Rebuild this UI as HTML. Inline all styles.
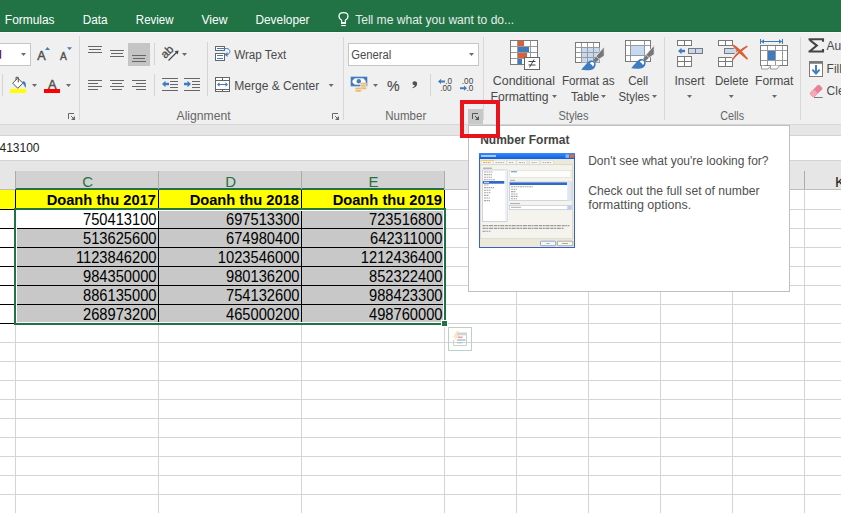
<!DOCTYPE html>
<html><head><meta charset="utf-8"><style>
*{margin:0;padding:0;box-sizing:border-box}
html,body{width:841px;height:513px;overflow:hidden;background:#fff}
body{position:relative;font-family:"Liberation Sans",sans-serif}
.a{position:absolute}
.t{position:absolute;white-space:nowrap;line-height:1;font-size:12px}
svg{position:absolute;overflow:visible}
</style></head><body>
<div class="a" style="left:0px;top:125px;width:841px;height:46px;background:#e6e6e6"></div>
<div class="a" style="left:0px;top:135px;width:841px;height:26px;background:#fff;border-top:1px solid #d4d4d4;border-bottom:1px solid #d4d4d4"></div>
<span class="t" style="left:-0.5px;top:142.34px;font-size:12px;color:#222;">413100</span>
<div class="a" style="left:0px;top:171px;width:841px;height:19px;background:#e6e6e6"></div>
<div class="a" style="left:0px;top:189px;width:15px;height:1px;background:#bdbdbd"></div>
<div class="a" style="left:444px;top:189px;width:397px;height:1px;background:#bdbdbd"></div>
<div class="a" style="left:15px;top:171px;width:429px;height:17px;background:#d2d2d2"></div>
<div class="a" style="left:15px;top:188px;width:429px;height:2px;background:#217346"></div>
<div class="a" style="left:15px;top:171px;width:1px;height:18px;background:#ababab"></div>
<div class="a" style="left:158px;top:171px;width:1px;height:18px;background:#ababab"></div>
<div class="a" style="left:301px;top:171px;width:1px;height:18px;background:#ababab"></div>
<div class="a" style="left:444px;top:171px;width:1px;height:18px;background:#ababab"></div>
<div class="a" style="left:516px;top:171px;width:1px;height:18px;background:#ababab"></div>
<div class="a" style="left:588px;top:171px;width:1px;height:18px;background:#ababab"></div>
<div class="a" style="left:660px;top:171px;width:1px;height:18px;background:#ababab"></div>
<div class="a" style="left:732px;top:171px;width:1px;height:18px;background:#ababab"></div>
<div class="a" style="left:804px;top:171px;width:1px;height:18px;background:#ababab"></div>
<span class="t" style="left:57.599999999999994px;width:60px;text-align:center;top:173.70px;font-size:15px;color:#217346">C</span>
<span class="t" style="left:200.6px;width:60px;text-align:center;top:173.70px;font-size:15px;color:#217346">D</span>
<span class="t" style="left:343.5px;width:60px;text-align:center;top:173.70px;font-size:15px;color:#217346">E</span>
<span class="t" style="left:835px;top:173.70px;font-size:15px;color:#222">K</span>
<div class="a" style="left:0px;top:209px;width:841px;height:1px;background:#d4d4d4"></div>
<div class="a" style="left:0px;top:228px;width:841px;height:1px;background:#d4d4d4"></div>
<div class="a" style="left:0px;top:247px;width:841px;height:1px;background:#d4d4d4"></div>
<div class="a" style="left:0px;top:266px;width:841px;height:1px;background:#d4d4d4"></div>
<div class="a" style="left:0px;top:285px;width:841px;height:1px;background:#d4d4d4"></div>
<div class="a" style="left:0px;top:304px;width:841px;height:1px;background:#d4d4d4"></div>
<div class="a" style="left:0px;top:323px;width:841px;height:1px;background:#d4d4d4"></div>
<div class="a" style="left:0px;top:342px;width:841px;height:1px;background:#d4d4d4"></div>
<div class="a" style="left:0px;top:361px;width:841px;height:1px;background:#d4d4d4"></div>
<div class="a" style="left:0px;top:380px;width:841px;height:1px;background:#d4d4d4"></div>
<div class="a" style="left:0px;top:399px;width:841px;height:1px;background:#d4d4d4"></div>
<div class="a" style="left:0px;top:418px;width:841px;height:1px;background:#d4d4d4"></div>
<div class="a" style="left:0px;top:437px;width:841px;height:1px;background:#d4d4d4"></div>
<div class="a" style="left:0px;top:456px;width:841px;height:1px;background:#d4d4d4"></div>
<div class="a" style="left:0px;top:475px;width:841px;height:1px;background:#d4d4d4"></div>
<div class="a" style="left:0px;top:494px;width:841px;height:1px;background:#d4d4d4"></div>
<div class="a" style="left:15px;top:190px;width:1px;height:323px;background:#d4d4d4"></div>
<div class="a" style="left:158px;top:190px;width:1px;height:323px;background:#d4d4d4"></div>
<div class="a" style="left:301px;top:190px;width:1px;height:323px;background:#d4d4d4"></div>
<div class="a" style="left:444px;top:190px;width:1px;height:323px;background:#d4d4d4"></div>
<div class="a" style="left:516px;top:190px;width:1px;height:323px;background:#d4d4d4"></div>
<div class="a" style="left:588px;top:190px;width:1px;height:323px;background:#d4d4d4"></div>
<div class="a" style="left:660px;top:190px;width:1px;height:323px;background:#d4d4d4"></div>
<div class="a" style="left:732px;top:190px;width:1px;height:323px;background:#d4d4d4"></div>
<div class="a" style="left:804px;top:190px;width:1px;height:323px;background:#d4d4d4"></div>
<div class="a" style="left:0px;top:190px;width:444px;height:19px;background:#ffff00"></div>
<div class="a" style="left:15px;top:209px;width:429px;height:114px;background:#c8c8c8"></div>
<div class="a" style="left:15px;top:209px;width:143px;height:19px;background:#fff"></div>
<div class="a" style="left:0px;top:209px;width:444px;height:1px;background:#000"></div>
<div class="a" style="left:0px;top:228px;width:444px;height:1px;background:#000"></div>
<div class="a" style="left:0px;top:247px;width:444px;height:1px;background:#000"></div>
<div class="a" style="left:0px;top:266px;width:444px;height:1px;background:#000"></div>
<div class="a" style="left:0px;top:285px;width:444px;height:1px;background:#000"></div>
<div class="a" style="left:0px;top:304px;width:444px;height:1px;background:#000"></div>
<div class="a" style="left:0px;top:323px;width:444px;height:1px;background:#000"></div>
<div class="a" style="left:15px;top:190px;width:1px;height:133px;background:#000"></div>
<div class="a" style="left:158px;top:190px;width:1px;height:133px;background:#000"></div>
<div class="a" style="left:301px;top:190px;width:1px;height:133px;background:#000"></div>
<div class="a" style="left:444px;top:190px;width:1px;height:19px;background:#000"></div>
<span class="t" style="left:8px;width:148px;text-align:right;top:192.56px;font-size:14.7px;font-weight:bold;color:#000">Doanh thu 2017</span>
<span class="t" style="left:151px;width:148px;text-align:right;top:192.56px;font-size:14.7px;font-weight:bold;color:#000">Doanh thu 2018</span>
<span class="t" style="left:294px;width:148px;text-align:right;top:192.56px;font-size:14.7px;font-weight:bold;color:#000">Doanh thu 2019</span>
<span class="t" style="left:18px;width:138.5px;text-align:right;top:213.16px;font-size:14.7px;color:#000;transform:scaleY(1.09);transform-origin:0 12.44px">750413100</span>
<span class="t" style="left:161px;width:138.5px;text-align:right;top:213.16px;font-size:14.7px;color:#000;transform:scaleY(1.09);transform-origin:0 12.44px">697513300</span>
<span class="t" style="left:304px;width:138.5px;text-align:right;top:213.16px;font-size:14.7px;color:#000;transform:scaleY(1.09);transform-origin:0 12.44px">723516800</span>
<span class="t" style="left:18px;width:138.5px;text-align:right;top:232.16px;font-size:14.7px;color:#000;transform:scaleY(1.09);transform-origin:0 12.44px">513625600</span>
<span class="t" style="left:161px;width:138.5px;text-align:right;top:232.16px;font-size:14.7px;color:#000;transform:scaleY(1.09);transform-origin:0 12.44px">674980400</span>
<span class="t" style="left:304px;width:138.5px;text-align:right;top:232.16px;font-size:14.7px;color:#000;transform:scaleY(1.09);transform-origin:0 12.44px">642311000</span>
<span class="t" style="left:18px;width:138.5px;text-align:right;top:251.16px;font-size:14.7px;color:#000;transform:scaleY(1.09);transform-origin:0 12.44px">1123846200</span>
<span class="t" style="left:161px;width:138.5px;text-align:right;top:251.16px;font-size:14.7px;color:#000;transform:scaleY(1.09);transform-origin:0 12.44px">1023546000</span>
<span class="t" style="left:304px;width:138.5px;text-align:right;top:251.16px;font-size:14.7px;color:#000;transform:scaleY(1.09);transform-origin:0 12.44px">1212436400</span>
<span class="t" style="left:18px;width:138.5px;text-align:right;top:270.16px;font-size:14.7px;color:#000;transform:scaleY(1.09);transform-origin:0 12.44px">984350000</span>
<span class="t" style="left:161px;width:138.5px;text-align:right;top:270.16px;font-size:14.7px;color:#000;transform:scaleY(1.09);transform-origin:0 12.44px">980136200</span>
<span class="t" style="left:304px;width:138.5px;text-align:right;top:270.16px;font-size:14.7px;color:#000;transform:scaleY(1.09);transform-origin:0 12.44px">852322400</span>
<span class="t" style="left:18px;width:138.5px;text-align:right;top:289.16px;font-size:14.7px;color:#000;transform:scaleY(1.09);transform-origin:0 12.44px">886135000</span>
<span class="t" style="left:161px;width:138.5px;text-align:right;top:289.16px;font-size:14.7px;color:#000;transform:scaleY(1.09);transform-origin:0 12.44px">754132600</span>
<span class="t" style="left:304px;width:138.5px;text-align:right;top:289.16px;font-size:14.7px;color:#000;transform:scaleY(1.09);transform-origin:0 12.44px">988423300</span>
<span class="t" style="left:18px;width:138.5px;text-align:right;top:308.16px;font-size:14.7px;color:#000;transform:scaleY(1.09);transform-origin:0 12.44px">268973200</span>
<span class="t" style="left:161px;width:138.5px;text-align:right;top:308.16px;font-size:14.7px;color:#000;transform:scaleY(1.09);transform-origin:0 12.44px">465000200</span>
<span class="t" style="left:304px;width:138.5px;text-align:right;top:308.16px;font-size:14.7px;color:#000;transform:scaleY(1.09);transform-origin:0 12.44px">498760000</span>
<div class="a" style="left:16px;top:210px;width:1px;height:113px;background:#fff"></div>
<div class="a" style="left:16px;top:210px;width:428px;height:1px;background:#fff"></div>
<div class="a" style="left:443px;top:210px;width:1px;height:113px;background:#fff"></div>
<div class="a" style="left:16px;top:322px;width:428px;height:1px;background:#fff"></div>
<div class="a" style="left:14px;top:208px;width:2px;height:116px;background:#217346"></div>
<div class="a" style="left:14px;top:208px;width:432px;height:2px;background:#217346"></div>
<div class="a" style="left:444px;top:208px;width:2px;height:114px;background:#217346"></div>
<div class="a" style="left:14px;top:323px;width:428px;height:2px;background:#217346"></div>
<div class="a" style="left:441px;top:320px;width:7px;height:7px;background:#fff"></div>
<div class="a" style="left:442px;top:321px;width:5px;height:5px;background:#217346"></div>
<div class="a" style="left:448px;top:327px;width:24px;height:24px;border:1px solid #b9d3c3"></div>
<svg class="a" style="left:0;top:0" width="841" height="513"><g opacity="0.8"><path d="M457.5 334 H466.5 V345.5 H453.5 V340" fill="none" stroke="#c4c4c4"/><rect x="457" y="332.5" width="10" height="2.8" fill="#c8c8c8"/><path d="M456.8 331 L452.6 337.4 H455.8 L453.4 341.8 L459.6 335 H456.4 L459.2 331 Z" fill="#f6dfb8"/><rect x="458" y="336.5" width="4.5" height="1.6" fill="#e88a7a"/><rect x="457" y="339.2" width="8.5" height="1.7" fill="#9fbbe0"/><rect x="457" y="342" width="5.5" height="1.4" fill="#9ccfb0"/></g></svg>
<div class="a" style="left:0px;top:0px;width:841px;height:32px;background:#217346;border-bottom:1px solid #1e6b41"></div>
<svg class="a" style="left:0;top:0" width="841" height="513"><text x="4.86" y="23.8" font-family="Liberation Sans" font-size="12" font-weight="normal" fill="#fff" textLength="49.68" lengthAdjust="spacingAndGlyphs" >Formulas</text></svg>
<svg class="a" style="left:0;top:0" width="841" height="513"><text x="82.66" y="23.8" font-family="Liberation Sans" font-size="12" font-weight="normal" fill="#fff" textLength="24.88" lengthAdjust="spacingAndGlyphs" >Data</text></svg>
<svg class="a" style="left:0;top:0" width="841" height="513"><text x="135.86" y="23.8" font-family="Liberation Sans" font-size="12" font-weight="normal" fill="#fff" textLength="37.68" lengthAdjust="spacingAndGlyphs" >Review</text></svg>
<svg class="a" style="left:0;top:0" width="841" height="513"><text x="201.46" y="23.8" font-family="Liberation Sans" font-size="12" font-weight="normal" fill="#fff" textLength="26.08" lengthAdjust="spacingAndGlyphs" >View</text></svg>
<svg class="a" style="left:0;top:0" width="841" height="513"><text x="255.46" y="23.8" font-family="Liberation Sans" font-size="12" font-weight="normal" fill="#fff" textLength="54.08" lengthAdjust="spacingAndGlyphs" >Developer</text></svg>
<svg class="a" style="left:0;top:0" width="841" height="513"><text x="355.16" y="24" font-family="Liberation Sans" font-size="12" font-weight="normal" fill="#e6ede9" textLength="158.98" lengthAdjust="spacingAndGlyphs" >Tell me what you want to do...</text></svg>
<svg class="a" style="left:0;top:0" width="841" height="32"><path d="M341.6 22.6 V20.3 C337.6 17.6 338.2 12.7 343.5 12.7 C348.8 12.7 349.4 17.6 345.4 20.3 V22.6 Z" fill="none" stroke="#fff" stroke-width="1.2"/><rect x="341" y="22.3" width="5" height="1.6" fill="#fff"/><rect x="341.2" y="25" width="4.6" height="1.1" fill="#fff"/></svg>
<div class="a" style="left:0px;top:32px;width:841px;height:93px;background:#f0f0f0;border-top:1px solid #f8f8f8;border-bottom:1px solid #d6d6d6"></div>
<div class="a" style="left:79px;top:36px;width:1px;height:84px;background:#d8d8d8"></div>
<div class="a" style="left:343px;top:37px;width:1px;height:83px;background:#d8d8d8"></div>
<div class="a" style="left:483px;top:37px;width:1px;height:83px;background:#d8d8d8"></div>
<div class="a" style="left:664px;top:37px;width:1px;height:83px;background:#d8d8d8"></div>
<div class="a" style="left:800px;top:37px;width:1px;height:83px;background:#d8d8d8"></div>
<svg class="a" style="left:0;top:0" width="841" height="513"><text x="176.56" y="120.3" font-family="Liberation Sans" font-size="12" font-weight="normal" fill="#666" textLength="54.08" lengthAdjust="spacingAndGlyphs" >Alignment</text></svg>
<svg class="a" style="left:0;top:0" width="841" height="513"><text x="385.26" y="120.3" font-family="Liberation Sans" font-size="12" font-weight="normal" fill="#666" textLength="40.98" lengthAdjust="spacingAndGlyphs" >Number</text></svg>
<svg class="a" style="left:0;top:0" width="841" height="513"><text x="558.46" y="120.3" font-family="Liberation Sans" font-size="12" font-weight="normal" fill="#666" textLength="30.08" lengthAdjust="spacingAndGlyphs" >Styles</text></svg>
<svg class="a" style="left:0;top:0" width="841" height="513"><text x="720.16" y="120.3" font-family="Liberation Sans" font-size="12" font-weight="normal" fill="#666" textLength="23.88" lengthAdjust="spacingAndGlyphs" >Cells</text></svg>
<svg class="a" style="left:0;top:0" width="841" height="130" viewBox="0 0 841 130"><rect x="-1.5" y="43.5" width="32" height="22" fill="#fff" stroke="#c6c6c6"/><rect x="0" y="50" width="1.2" height="8.7" fill="#5b2a86"/><path d="M21 53h5l-2.5 3z" fill="#6b6b6b"/><text x="37.3" y="59.6" font-size="12.6" fill="#505050" stroke="#505050" stroke-width="0.45" font-family="Liberation Sans">A</text><path d="M45 50h5l-2.5-3z" fill="#3e7bbf"/><text x="60.1" y="59.6" font-size="10.2" fill="#505050" stroke="#505050" stroke-width="0.4" font-family="Liberation Sans">A</text><path d="M67 47.3h5l-2.5 2.7z" fill="#3e7bbf"/><rect x="2" y="74" width="1" height="22" fill="#d4d4d4"/><path d="M12.7 83.2 L17.8 78.1 L22.9 83.2 L17.8 88.3 Z" fill="#fff" stroke="#555" stroke-width="1"/><path d="M16 80 V77.3 H18.3 V82.5" fill="none" stroke="#555" stroke-width="1"/><path d="M22.6 81.2 C25.2 80.8 26.6 83.5 25.6 88 C24.8 86.5 24 84.5 22.9 83.4 Z" fill="#3e7bbf"/><rect x="10" y="89" width="16" height="4" fill="#ffff00"/><path d="M32 84h5l-2.5 3z" fill="#6b6b6b"/><text x="47.9" y="88.6" font-size="12.8" fill="#505050" stroke="#505050" stroke-width="0.45" font-family="Liberation Sans">A</text><rect x="44" y="89" width="16" height="4" fill="#ff0000"/><path d="M66 84h5l-2.5 3z" fill="#6b6b6b"/><path d="M68.5 119 V113.5 H74" fill="none" stroke="#666" stroke-width="1"/><path d="M75 116 V120 H71 Z" fill="#666"/><path d="M71 116 L74 119" stroke="#666" stroke-width="1"/><rect x="88" y="46" width="14" height="1" fill="#666"/><rect x="89" y="49" width="12" height="1" fill="#666"/><rect x="88" y="52" width="14" height="1" fill="#666"/><rect x="110" y="50" width="14" height="1" fill="#666"/><rect x="111" y="53" width="12" height="1" fill="#666"/><rect x="110" y="56" width="14" height="1" fill="#666"/><rect x="128" y="43" width="22" height="23" fill="#c5c5c5"/><rect x="132" y="55" width="14" height="1" fill="#666"/><rect x="133" y="58" width="12" height="1" fill="#666"/><rect x="132" y="61" width="14" height="1" fill="#666"/><rect x="88" y="80" width="14" height="1" fill="#666"/><rect x="110" y="80" width="14" height="1" fill="#666"/><rect x="132" y="80" width="14" height="1" fill="#666"/><rect x="88" y="83" width="10" height="1" fill="#666"/><rect x="112" y="83" width="10" height="1" fill="#666"/><rect x="136" y="83" width="10" height="1" fill="#666"/><rect x="88" y="86" width="14" height="1" fill="#666"/><rect x="110" y="86" width="14" height="1" fill="#666"/><rect x="132" y="86" width="14" height="1" fill="#666"/><rect x="88" y="89" width="10" height="1" fill="#666"/><rect x="112" y="89" width="10" height="1" fill="#666"/><rect x="136" y="89" width="10" height="1" fill="#666"/><rect x="154" y="43" width="1" height="22" fill="#d4d4d4"/><rect x="154" y="74" width="1" height="22" fill="#d4d4d4"/><text x="0" y="0" font-size="11.5" fill="#4a4a4a" stroke="#4a4a4a" stroke-width="0.3" font-family="Liberation Sans" transform="translate(165.2 58.9) rotate(-45)">ab</text><path d="M168.5 60.5 L177.5 51.5" stroke="#444" stroke-width="1.1"/><path d="M178.5 50.5 L174.5 51.2 L177.8 54.5 Z" fill="#444"/><path d="M182 53h5l-2.5 3z" fill="#6b6b6b"/><rect x="162" y="78" width="16" height="1" fill="#666"/><rect x="170" y="81" width="8" height="1" fill="#666"/><rect x="170" y="84" width="8" height="1" fill="#666"/><rect x="170" y="87" width="8" height="1" fill="#666"/><rect x="162" y="90" width="16" height="1" fill="#666"/><path d="M162 84 L165.5 80.8 V82.8 H169 V85.2 H165.5 V87.2 Z" fill="#3e7bbf"/><rect x="184" y="78" width="16" height="1" fill="#666"/><rect x="192" y="81" width="8" height="1" fill="#666"/><rect x="192" y="84" width="8" height="1" fill="#666"/><rect x="192" y="87" width="8" height="1" fill="#666"/><rect x="184" y="90" width="16" height="1" fill="#666"/><path d="M191 84 L187.5 80.8 V82.8 H184 V85.2 H187.5 V87.2 Z" fill="#3e7bbf"/><rect x="207" y="42" width="1" height="54" fill="#d4d4d4"/><rect x="215.5" y="46.5" width="9" height="4" fill="#fff" stroke="#666"/><rect x="215.5" y="53.5" width="9" height="7" fill="#fff" stroke="#666"/><path d="M217 48.5 H226.5 C231 48.5 231 54.5 226.5 54.5 H225" fill="none" stroke="#3e7bbf" stroke-width="1"/><path d="M224.5 54.5 L227.5 52 V57 Z" fill="#3e7bbf"/><rect x="217" y="55" width="6" height="1" fill="#3e7bbf"/><rect x="217" y="58" width="6" height="1" fill="#3e7bbf"/><rect x="215.5" y="77.5" width="14" height="14" fill="#fff" stroke="#666"/><rect x="216" y="80" width="13" height="1" fill="#666"/><rect x="216" y="89" width="13" height="1" fill="#666"/><rect x="222" y="78" width="1" height="2" fill="#666"/><rect x="222" y="89" width="1" height="2" fill="#666"/><path d="M218 84.5 H227" stroke="#3e7bbf" stroke-width="1"/><path d="M217 84.5 L219.5 82.3 V86.7 Z M228 84.5 L225.5 82.3 V86.7 Z" fill="#3e7bbf"/><path d="M328.6 84h5l-2.5 3z" fill="#6b6b6b"/><path d="M332.5 119 V113.5 H338" fill="none" stroke="#666" stroke-width="1"/><path d="M339 116 V120 H335 Z" fill="#666"/><path d="M335 116 L338 119" stroke="#666" stroke-width="1"/><rect x="348.5" y="43.5" width="130" height="22" fill="#fff" stroke="#c6c6c6"/><path d="M469 53h5l-2.5 3z" fill="#6b6b6b"/><rect x="351.5" y="77.5" width="15" height="8" fill="#fff" stroke="#3e7bbf" stroke-width="1.6"/><circle cx="358.8" cy="81.3" r="2.2" fill="#3e7bbf"/><path d="M352 78 h3 l-3 3z M366 78 h-3 l3 3z M352 85 h3 l-3 -3z" fill="#3e7bbf"/><ellipse cx="363.5" cy="83.8" rx="3.4" ry="1.3" fill="#e9b96e" stroke="#f0f0f0" stroke-width="0.5"/><ellipse cx="363.5" cy="86" rx="3.4" ry="1.3" fill="#e9b96e" stroke="#f0f0f0" stroke-width="0.5"/><ellipse cx="363.5" cy="88.2" rx="3.4" ry="1.3" fill="#e9b96e" stroke="#f0f0f0" stroke-width="0.5"/><ellipse cx="358.3" cy="88.6" rx="3.4" ry="1.3" fill="#e9b96e" stroke="#f0f0f0" stroke-width="0.5"/><ellipse cx="358.3" cy="90.8" rx="3.4" ry="1.3" fill="#e9b96e" stroke="#f0f0f0" stroke-width="0.5"/><path d="M373 84h5l-2.5 3z" fill="#6b6b6b"/><text x="386.9" y="90.9" font-size="14.2" fill="#4a4a4a" stroke="#4a4a4a" stroke-width="0.15" font-family="Liberation Sans">%</text><path d="M414.6 81.3 C416.4 81.3 417.3 82.6 417.1 84.2 C416.9 86 415.2 87.6 412.6 88.2 L412.4 87.4 C413.8 86.8 414.6 86.1 414.8 85.3 C413.4 85.3 412.5 84.4 412.5 83.3 C412.5 82.1 413.4 81.3 414.6 81.3 Z" fill="#505050"/><rect x="430" y="74" width="1" height="22" fill="#d4d4d4"/><path d="M438 81.4 L441 78.80000000000001 V80.4 H445 V82.4 H441 V84.0 Z" fill="#3e7bbf"/><text x="445.3" y="83.8" font-size="8.2" fill="#444" font-family="Liberation Sans">.0</text><text x="440.2" y="91" font-size="8.2" fill="#444" font-family="Liberation Sans">.00</text><text x="461.8" y="83.8" font-size="8.2" fill="#444" font-family="Liberation Sans">.00</text><path d="M467 88.2 L464 85.60000000000001 V87.2 H460 V89.2 H464 V90.8 Z" fill="#3e7bbf"/><text x="466.6" y="91" font-size="8.2" fill="#444" font-family="Liberation Sans">.0</text><rect x="510.5" y="40.5" width="27" height="24" fill="#fff" stroke="#7a7a7a"/><path d="M511 46.5 H537" stroke="#9a9a9a"/><path d="M511 52.5 H537" stroke="#9a9a9a"/><path d="M511 58.5 H537" stroke="#9a9a9a"/><path d="M517.5 41 V64" stroke="#9a9a9a"/><path d="M530.5 41 V64" stroke="#9a9a9a"/><rect x="518" y="41" width="6" height="5" fill="#d9603b"/><rect x="518" y="47" width="11" height="5" fill="#3e7bbf"/><rect x="518" y="53" width="9" height="5" fill="#d9603b"/><rect x="518" y="59" width="4" height="5" fill="#3e7bbf"/><rect x="524" y="57" width="16" height="13" fill="#f0f0f0"/><rect x="524.5" y="57.5" width="15" height="12" fill="#fff" stroke="#666"/><path d="M528.5 61.5 H535.5 M528.5 65 H535.5 M534 59.5 L529.5 67.5" stroke="#444" stroke-width="1"/><rect x="575.5" y="42.5" width="24" height="20" fill="#fff" stroke="#7a7a7a"/><rect x="581.5" y="47.5" width="18" height="15" fill="#c5d9f1"/><path d="M576 47.5 H599" stroke="#9a9a9a"/><path d="M576 52.5 H599" stroke="#9a9a9a"/><path d="M576 57.5 H599" stroke="#9a9a9a"/><path d="M581.5 43 V62" stroke="#9a9a9a"/><path d="M587.5 43 V62" stroke="#9a9a9a"/><path d="M593.5 43 V62" stroke="#9a9a9a"/><g transform="translate(0 0)"><path d="M604.2 46.8 V56 L599 59.2 L596 56.2 Z" fill="#777" stroke="#f0f0f0" stroke-width="0.8"/><path d="M596.3 56.9 L598.9 59.3 L595.6 62.6 L593.1 60 Z" fill="#777"/><path d="M581.2 69.8 C584 66.5 586.5 63.5 588.2 61.8 C590 60.2 592.8 60 594.5 61.6 C596.3 63.4 596 66.6 594 68.4 C592.2 70 589.5 70.3 586.5 70.3 Z" fill="#3e7bbf"/><path d="M589.8 63.2 C591 61.8 593 61.8 593.9 63 C594.5 64 594 65.6 593 66.4 C592.3 65.2 591.2 64.2 589.8 63.2 Z" fill="#fff"/></g><rect x="625.5" y="40.5" width="25" height="21" fill="#fff" stroke="#7a7a7a"/><rect x="630.5" y="45.5" width="14" height="10" fill="#c5d9f1"/><path d="M626 45.5 H650 M626 55.5 H650 M630.5 41 V61 M644.5 41 V61" stroke="#9a9a9a"/><g transform="translate(50 -1.5)"><path d="M604.2 46.8 V56 L599 59.2 L596 56.2 Z" fill="#777" stroke="#f0f0f0" stroke-width="0.8"/><path d="M596.3 56.9 L598.9 59.3 L595.6 62.6 L593.1 60 Z" fill="#777"/><path d="M581.2 69.8 C584 66.5 586.5 63.5 588.2 61.8 C590 60.2 592.8 60 594.5 61.6 C596.3 63.4 596 66.6 594 68.4 C592.2 70 589.5 70.3 586.5 70.3 Z" fill="#3e7bbf"/><path d="M589.8 63.2 C591 61.8 593 61.8 593.9 63 C594.5 64 594 65.6 593 66.4 C592.3 65.2 591.2 64.2 589.8 63.2 Z" fill="#fff"/></g><rect x="677.5" y="40.5" width="14" height="5" fill="#fff" stroke="#7a7a7a"/><path d="M684.5 41 V45" stroke="#7a7a7a"/><path d="M678 51 L681.5 47.8 V49.8 H685 V52.2 H681.5 V54.2 Z" fill="#3e7bbf"/><rect x="688.5" y="48.5" width="14" height="5" fill="#c5d9f1" stroke="#7a7a7a"/><path d="M695.5 49 V53" stroke="#7a7a7a"/><rect x="677.5" y="56.5" width="14" height="10" fill="#fff" stroke="#7a7a7a"/><path d="M678 61.5 H691 M684.5 57 V66" stroke="#7a7a7a"/><rect x="718.5" y="40.5" width="14" height="5" fill="#fff" stroke="#7a7a7a"/><path d="M725.5 41 V45" stroke="#7a7a7a"/><rect x="724.5" y="48.5" width="12" height="5" fill="#c5d9f1" stroke="#7a7a7a"/><rect x="718.5" y="57.5" width="14" height="9" fill="#fff" stroke="#7a7a7a"/><path d="M719 61.5 H732 M725.5 58 V66" stroke="#7a7a7a"/><path d="M733 45.5 C737 47.5 741 51.5 747.2 59 M747.2 46.4 C742 49 737 53 733 59" fill="none" stroke="#f0f0f0" stroke-width="3.8"/><path d="M733 45.3 C736.5 46.8 740.5 50.5 747.5 59.2 C742 55 737.5 51 733 45.3 Z M747.3 46.2 C742.5 48.5 737.5 52.5 732.8 59.2 C737 54 742 50 747.3 46.2 Z" fill="#d9603b" stroke="#d9603b" stroke-width="1.6"/><path d="M760.5 39 V44 M782.5 39 V44 M761 41.5 H782" stroke="#3e7bbf" stroke-width="1"/><path d="M761 41.5 L764 39.3 V43.7 Z M782 41.5 L779 39.3 V43.7 Z" fill="#3e7bbf"/><rect x="760.5" y="45.5" width="27" height="20" fill="#fff" stroke="#7a7a7a"/><path d="M761 50.5 H787 M761 60.5 H787 M767.5 46 V65 M775.5 46 V65 M782.5 46 V65" stroke="#9a9a9a"/><rect x="768" y="51" width="7" height="9" fill="#3e7bbf"/><path d="M761.5 65.5 V69 H768 L770 66.5 M770.5 65.5 V69 H777 L779.5 65.5" fill="#fff" stroke="#9a9a9a"/><path d="M687.0 95h5l-2.5 3z" fill="#6b6b6b"/><path d="M728.8 95h5l-2.5 3z" fill="#6b6b6b"/><path d="M772.0 95h5l-2.5 3z" fill="#6b6b6b"/><path d="M808.5 39.3 H823 V41.8 M809.8 40 L816.8 45.6 L809.8 51.3 M808.5 51.5 H823 V49" fill="none" stroke="#444" stroke-width="2.1" stroke-linejoin="miter"/><rect x="809.5" y="61.5" width="13" height="15" fill="#fff" stroke="#7a7a7a"/><rect x="809" y="61" width="14" height="2.8" fill="#7a7a7a"/><path d="M816 65 V73.5" stroke="#3e7bbf" stroke-width="1.9"/><path d="M812.4 69.6 L816 73.6 L819.6 69.6" fill="none" stroke="#3e7bbf" stroke-width="1.9"/><path d="M810.2 92.4 L817.6 85.2 Q818.6 84.3 819.6 85.2 L822 87.6 Q822.9 88.6 822 89.6 L814.6 96.8 Q813.6 97.6 812.6 96.8 L810.2 94.4 Q809.4 93.4 810.2 92.4 Z" fill="#e9809a"/><path d="M810.4 92.6 L813.8 89.3 L817.6 93.3 L814.4 96.6 Q813.6 97.4 812.7 96.6 L810.4 94.3 Q809.6 93.4 810.4 92.6 Z" fill="#f2a9b9"/><path d="M814 97.5 H822.7" stroke="#7a7a7a" stroke-width="1"/></svg>
<svg class="a" style="left:0;top:0" width="841" height="513"><text x="234.16" y="59.2" font-family="Liberation Sans" font-size="12" font-weight="normal" fill="#4a4a4a" textLength="52.08" lengthAdjust="spacingAndGlyphs" >Wrap Text</text></svg>
<svg class="a" style="left:0;top:0" width="841" height="513"><text x="234.16" y="90" font-family="Liberation Sans" font-size="12" font-weight="normal" fill="#4a4a4a" textLength="85.18" lengthAdjust="spacingAndGlyphs" >Merge &amp; Center</text></svg>
<svg class="a" style="left:0;top:0" width="841" height="513"><text x="351.16" y="59.2" font-family="Liberation Sans" font-size="12" font-weight="normal" fill="#4a4a4a" textLength="40.08" lengthAdjust="spacingAndGlyphs" >General</text></svg>
<svg class="a" style="left:0;top:0" width="841" height="513"><text x="492.76" y="84.8" font-family="Liberation Sans" font-size="12" font-weight="normal" fill="#4a4a4a" textLength="62.18" lengthAdjust="spacingAndGlyphs" >Conditional</text></svg>
<svg class="a" style="left:0;top:0" width="841" height="513"><text x="490.46" y="100.7" font-family="Liberation Sans" font-size="12" font-weight="normal" fill="#4a4a4a" textLength="58.08" lengthAdjust="spacingAndGlyphs" >Formatting</text></svg>
<svg class="a" style="left:0;top:0" width="841" height="513"><text x="561.96" y="85" font-family="Liberation Sans" font-size="12" font-weight="normal" fill="#4a4a4a" textLength="52.58" lengthAdjust="spacingAndGlyphs" >Format as</text></svg>
<svg class="a" style="left:0;top:0" width="841" height="513"><text x="570.96" y="100.7" font-family="Liberation Sans" font-size="12" font-weight="normal" fill="#4a4a4a" textLength="28.18" lengthAdjust="spacingAndGlyphs" >Table</text></svg>
<svg class="a" style="left:0;top:0" width="841" height="513"><text x="628.16" y="85" font-family="Liberation Sans" font-size="12" font-weight="normal" fill="#4a4a4a" textLength="19.98" lengthAdjust="spacingAndGlyphs" >Cell</text></svg>
<svg class="a" style="left:0;top:0" width="841" height="513"><text x="618.46" y="100.7" font-family="Liberation Sans" font-size="12" font-weight="normal" fill="#4a4a4a" textLength="31.08" lengthAdjust="spacingAndGlyphs" >Styles</text></svg>
<svg class="a" style="left:0;top:0" width="841" height="513"><text x="674.46" y="84.8" font-family="Liberation Sans" font-size="12" font-weight="normal" fill="#4a4a4a" textLength="30.08" lengthAdjust="spacingAndGlyphs" >Insert</text></svg>
<svg class="a" style="left:0;top:0" width="841" height="513"><text x="714.96" y="84.8" font-family="Liberation Sans" font-size="12" font-weight="normal" fill="#4a4a4a" textLength="33.38" lengthAdjust="spacingAndGlyphs" >Delete</text></svg>
<svg class="a" style="left:0;top:0" width="841" height="513"><text x="755.06" y="84.8" font-family="Liberation Sans" font-size="12" font-weight="normal" fill="#4a4a4a" textLength="38.38" lengthAdjust="spacingAndGlyphs" >Format</text></svg>
<svg class="a" style="left:552.4px;top:95px" width="5" height="3"><path d="M0 0h5l-2.5 3z" fill="#6b6b6b"/></svg>
<svg class="a" style="left:601px;top:95px" width="5" height="3"><path d="M0 0h5l-2.5 3z" fill="#6b6b6b"/></svg>
<svg class="a" style="left:652px;top:95px" width="5" height="3"><path d="M0 0h5l-2.5 3z" fill="#6b6b6b"/></svg>
<span class="t" style="left:826.6px;top:40.14px;font-size:12px;color:#4a4a4a;">Au</span>
<span class="t" style="left:826.6px;top:63.44px;font-size:12px;color:#4a4a4a;">Fill</span>
<span class="t" style="left:826.6px;top:85.44px;font-size:12px;color:#4a4a4a;">Cle</span>
<div class="a" style="left:468px;top:125px;width:322px;height:167px;background:#fff;border:1px solid #bfbfbf"></div>
<svg class="a" style="left:0;top:0" width="841" height="513"><text x="480.16" y="143.8" font-family="Liberation Sans" font-size="12" font-weight="bold" fill="#444" textLength="89.28" lengthAdjust="spacingAndGlyphs" >Number Format</text></svg>
<svg class="a" style="left:0;top:0" width="841" height="513"><text x="588.16" y="165.3" font-family="Liberation Sans" font-size="12" font-weight="normal" fill="#505050" textLength="180.38" lengthAdjust="spacingAndGlyphs" >Don&#39;t see what you&#39;re looking for?</text></svg>
<svg class="a" style="left:0;top:0" width="841" height="513"><text x="588.16" y="195.4" font-family="Liberation Sans" font-size="12" font-weight="normal" fill="#505050" textLength="171.38" lengthAdjust="spacingAndGlyphs" >Check out the full set of number</text></svg>
<svg class="a" style="left:0;top:0" width="841" height="513"><text x="588.16" y="209.4" font-family="Liberation Sans" font-size="12" font-weight="normal" fill="#505050" textLength="103.08" lengthAdjust="spacingAndGlyphs" >formatting options.</text></svg>
<svg class="a" style="left:0;top:0" width="841" height="513"><defs><linearGradient id="tb" x1="0" y1="0" x2="0" y2="1"><stop offset="0" stop-color="#3d8af7"/><stop offset="1" stop-color="#0a5ee0"/></linearGradient></defs><rect x="479" y="153" width="96" height="95" fill="#ece9d8"/><rect x="479.5" y="153.5" width="95" height="94" fill="none" stroke="#3a5fc8" stroke-width="1"/><rect x="479" y="153" width="96" height="6" fill="url(#tb)"/><rect x="481" y="155.2" width="15" height="1.6" fill="#fff" opacity="0.75"/><rect x="565.5" y="154.4" width="3.5" height="3.5" fill="#8fb0ee"/><rect x="569.7" y="154.4" width="4.2" height="3.5" fill="#e46a3e"/><rect x="481" y="160.5" width="12" height="4.4" fill="#f8f8f4" stroke="#c8c6b8" stroke-width="0.3"/><path d="M483 162.6 h8" stroke="#555" stroke-width="1" stroke-dasharray="2 0.6 1.5 0.6" opacity="0.45"/><rect x="493.5" y="160.5" width="13.0" height="4.4" fill="#f8f8f4" stroke="#c8c6b8" stroke-width="0.3"/><path d="M495.5 162.6 h9.0" stroke="#555" stroke-width="1" stroke-dasharray="2 0.6 1.5 0.6" opacity="0.45"/><rect x="507" y="160.5" width="9" height="4.4" fill="#f8f8f4" stroke="#c8c6b8" stroke-width="0.3"/><path d="M509 162.6 h5" stroke="#555" stroke-width="1" stroke-dasharray="2 0.6 1.5 0.6" opacity="0.45"/><rect x="517" y="160.5" width="10" height="4.4" fill="#f8f8f4" stroke="#c8c6b8" stroke-width="0.3"/><path d="M519 162.6 h6" stroke="#555" stroke-width="1" stroke-dasharray="2 0.6 1.5 0.6" opacity="0.45"/><rect x="529.5" y="160.5" width="9.5" height="4.4" fill="#f8f8f4" stroke="#c8c6b8" stroke-width="0.3"/><path d="M531.5 162.6 h5.5" stroke="#555" stroke-width="1" stroke-dasharray="2 0.6 1.5 0.6" opacity="0.45"/><rect x="540.3" y="160.5" width="13.0" height="4.4" fill="#f8f8f4" stroke="#c8c6b8" stroke-width="0.3"/><path d="M542.3 162.6 h9.0" stroke="#555" stroke-width="1" stroke-dasharray="2 0.6 1.5 0.6" opacity="0.45"/><rect x="481" y="160.2" width="12" height="0.9" fill="#ffc83c"/><rect x="480.5" y="164.8" width="92" height="74" fill="#f4f3ee" stroke="#c9c6b6" stroke-width="0.5"/><rect x="483" y="167.6" width="9" height="1.2" fill="#7a7a7a" opacity="0.6"/><rect x="482.5" y="170" width="25" height="51.3" fill="#fff" stroke="#9fb0c8" stroke-width="0.5"/><rect x="505" y="170.3" width="2.4" height="50.8" fill="#eef0f3"/><path d="M484 172.0 h9" stroke="#555" stroke-width="1.1" stroke-dasharray="2 0.5 1.5 0.5" opacity="0.5"/><path d="M484 174.6 h8" stroke="#555" stroke-width="1.1" stroke-dasharray="2 0.5 1.5 0.5" opacity="0.5"/><path d="M484 177.2 h8" stroke="#555" stroke-width="1.1" stroke-dasharray="2 0.5 1.5 0.5" opacity="0.5"/><path d="M484 179.8 h11" stroke="#555" stroke-width="1.1" stroke-dasharray="2 0.5 1.5 0.5" opacity="0.5"/><rect x="482.8" y="181" width="21.5" height="2.7" fill="#316ac5"/><rect x="484" y="181.8" width="5" height="1.1" fill="#fff" opacity="0.7"/><path d="M484 185.0 h5" stroke="#555" stroke-width="1.1" stroke-dasharray="2 0.5 1.5 0.5" opacity="0.5"/><path d="M484 187.6 h10" stroke="#555" stroke-width="1.1" stroke-dasharray="2 0.5 1.5 0.5" opacity="0.5"/><path d="M484 190.2 h7" stroke="#555" stroke-width="1.1" stroke-dasharray="2 0.5 1.5 0.5" opacity="0.5"/><path d="M484 192.8 h7" stroke="#555" stroke-width="1.1" stroke-dasharray="2 0.5 1.5 0.5" opacity="0.5"/><path d="M484 195.4 h5" stroke="#555" stroke-width="1.1" stroke-dasharray="2 0.5 1.5 0.5" opacity="0.5"/><path d="M484 198.0 h6" stroke="#555" stroke-width="1.1" stroke-dasharray="2 0.5 1.5 0.5" opacity="0.5"/><path d="M484 200.6 h6" stroke="#555" stroke-width="1.1" stroke-dasharray="2 0.5 1.5 0.5" opacity="0.5"/><rect x="509.5" y="170.5" width="61.5" height="7" fill="#fdfdfb" stroke="#d6d3c4" stroke-width="0.5"/><rect x="511" y="171.2" width="6" height="1.1" fill="#2e6bd0" opacity="0.7"/><rect x="510" y="179.8" width="5" height="1.1" fill="#7a7a7a" opacity="0.55"/><rect x="509.5" y="182" width="61.6" height="18.7" fill="#fff" stroke="#9fb0c8" stroke-width="0.5"/><rect x="509.8" y="182.4" width="57.2" height="2.6" fill="#316ac5"/><rect x="567.2" y="182.3" width="3.8" height="18.2" fill="#dfe7f6"/><path d="M511 186.8 h22" stroke="#555" stroke-width="1.1" stroke-dasharray="2 0.5 1.5 0.5" opacity="0.5"/><path d="M511 189.2 h6" stroke="#555" stroke-width="1.1" stroke-dasharray="2 0.5 1.5 0.5" opacity="0.5"/><path d="M511 191.6 h5" stroke="#555" stroke-width="1.1" stroke-dasharray="2 0.5 1.5 0.5" opacity="0.5"/><path d="M511 194.0 h7" stroke="#555" stroke-width="1.1" stroke-dasharray="2 0.5 1.5 0.5" opacity="0.5"/><path d="M511 196.4 h7" stroke="#555" stroke-width="1.1" stroke-dasharray="2 0.5 1.5 0.5" opacity="0.5"/><path d="M511 198.8 h6" stroke="#555" stroke-width="1.1" stroke-dasharray="2 0.5 1.5 0.5" opacity="0.5"/><rect x="510" y="203" width="10" height="1.1" fill="#7a7a7a" opacity="0.55"/><rect x="509.3" y="205.4" width="62" height="4.1" fill="#fff" stroke="#9fb0c8" stroke-width="0.5"/><rect x="567.3" y="205.6" width="4" height="3.8" fill="#b9cdf3"/><rect x="511" y="206.8" width="10" height="1.1" fill="#7a7a7a" opacity="0.55"/><path d="M482.5 225.6 h87" stroke="#555" stroke-width="1.1" stroke-dasharray="3.2 0.6 2 0.7 4 0.8" opacity="0.55"/><path d="M482.5 228.4 h81" stroke="#555" stroke-width="1.1" stroke-dasharray="3.2 0.6 2 0.7 4 0.8" opacity="0.55"/><path d="M482.5 231.2 h8" stroke="#555" stroke-width="1.1" stroke-dasharray="3.2 0.6 2 0.7 4 0.8" opacity="0.55"/><rect x="540.5" y="241.2" width="15.2" height="4.5" rx="0.8" fill="#f6f6f2" stroke="#3c5fb8" stroke-width="0.5"/><rect x="557.4" y="241.2" width="15.4" height="4.5" rx="0.8" fill="#f6f6f2" stroke="#6b6b6b" stroke-width="0.5"/><rect x="546.5" y="243" width="3" height="1" fill="#7a7a7a" opacity="0.6"/><rect x="562" y="243" width="6" height="1" fill="#7a7a7a" opacity="0.6"/></svg>
<div class="a" style="left:468px;top:109px;width:15px;height:15px;background:#c8c8c8"></div>
<svg class="a" style="left:0;top:0" width="841" height="130"><path d="M472.5 119 V113.5 H478" fill="none" stroke="#555" stroke-width="1"/><path d="M479 116 V120 H475 Z" fill="#555"/><path d="M475 116 L478 119" stroke="#555" stroke-width="1"/></svg>
<div class="a" style="left:460px;top:100px;width:40px;height:38px;border:4.5px solid #e8141b"></div>
</body></html>
